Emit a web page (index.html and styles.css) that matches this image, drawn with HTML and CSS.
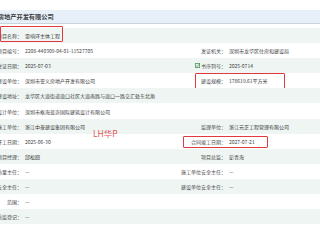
FILE: index.html
```html
<!DOCTYPE html>
<html lang="zh">
<head>
<meta charset="utf-8">
<link rel="stylesheet" href="styles.css">
</head>
<body>
<div class="page">
  <div class="head"><span class="head-text">深圳市誉义房地产开发有限公司</span></div>
  <div class="rows">
    <div class="row alt">
      <div class="lab">项目名称：</div><div class="val">雷响环主体工程</div>
      <div class="lab"></div><div class="val"></div>
      <span class="mark mark-name"></span>
    </div>
    <div class="row">
      <div class="lab">项目编号：</div><div class="val">2208-440309-04-01-11527705</div>
      <div class="lab">发证机关：</div><div class="val">深圳市龙华区住房和建设局</div>
    </div>
    <div class="row alt">
      <div class="lab">发证日期：</div><div class="val">2025-07-03</div>
      <div class="lab"><svg class="ico" viewBox="0 0 5 5" width="5" height="5"><rect x="0.4" y="0.4" width="4.2" height="4.2" fill="none" stroke="#4f9a5a" stroke-width="0.8"/><path d="M1.2 2.6 L2.2 3.6 L4.6 0.6" fill="none" stroke="#4f9a5a" stroke-width="0.8"/></svg>书序列号：</div><div class="val">2025-0714</div>
    </div>
    <div class="row">
      <div class="lab">建设单位：</div><div class="val">深圳市誉义房地产开发有限公司</div>
      <div class="lab">建设规模：</div><div class="val">178619.61平方米</div>
      <span class="mark mark-scale"></span>
    </div>
    <div class="row alt">
      <div class="lab">建设地址：</div><div class="val">龙华区大浪街道浪口社区大浪南路与浪口一路交汇处东北角</div>
      <div class="lab"></div><div class="val"></div>
    </div>
    <div class="row">
      <div class="lab">设计单位：</div><div class="val">深圳市枢海蓝奇国际建筑设计有限公司</div>
      <div class="lab"></div><div class="val"></div>
    </div>
    <div class="row alt">
      <div class="lab">施工单位：</div><div class="val">浙江中菱建设集团有限公司</div>
      <div class="lab">监理单位：</div><div class="val">浙江元正工程管理有限公司</div>
      <span class="wm">LH华P</span>
    </div>
    <div class="row">
      <div class="lab">开工日期：</div><div class="val">2025-06-30</div>
      <div class="lab">合同竣工日期：</div><div class="val">2027-07-21</div>
      <span class="mark mark-date"></span>
    </div>
    <div class="row alt">
      <div class="lab">项目经理：</div><div class="val">邱松圆</div>
      <div class="lab">项目总监：</div><div class="val">彭青海</div>
    </div>
    <div class="row">
      <div class="lab">质量主任：</div><div class="val">—</div>
      <div class="lab">施工单位安全主任：</div><div class="val">—</div>
    </div>
    <div class="row alt">
      <div class="lab">安全主任：</div><div class="val">—</div>
      <div class="lab">建设单位安全主任：</div><div class="val">—</div>
    </div>
    <div class="row">
      <div class="lab">范围：</div><div class="val">—</div>
      <div class="lab"></div><div class="val"></div>
    </div>
    <div class="row alt">
      <div class="lab">质监登记：</div><div class="val">—</div>
      <div class="lab"></div><div class="val"></div>
    </div>
  </div>
</div>
</body>
</html>
```
FILE: styles.css
```css
html, body {
  margin: 0;
  padding: 0;
  background: #ffffff;
  overflow: hidden;
}
body {
  width: 320px;
  height: 240px;
  font-family: "Noto Sans CJK SC", "Noto Sans", sans-serif;
  color: #333;
}
.page {
  padding-top: 10px;
}
.head {
  height: 13px;
  background: #e7f0f8;
  border-bottom: 1px solid #c9d3dc;
  display: flex;
  align-items: center;
  overflow: hidden;
}
.head-text {
  font-size: 6.2px;
  font-weight: bold;
  color: #3a3a3a;
  white-space: nowrap;
  margin-left: -33px;
}
.rows {
  margin-top: 4px;
}
.row {
  position: relative;
  display: grid;
  grid-template-columns: 22px 153px 51px 94px;
  height: 15.1px;
  align-items: center;
  font-size: 5px;
  white-space: nowrap;
}
.row.alt {
  background: #eef5f2;
}
.lab {
  display: flex;
  justify-content: flex-end;
  align-items: center;
  color: #4a4a4a;
  min-width: 0;
}
.val {
  padding-left: 3px;
  color: #3c3c3c;
  overflow: hidden;
}
.ico {
  margin-right: 0.5px;
}
.mark {
  position: absolute;
  border: 1px solid #e0393e;
  border-radius: 1px;
  box-sizing: border-box;
}
.mark-name {
  left: 0;
  top: -2px;
  width: 63px;
  height: 16px;
}
.mark-scale {
  left: 195px;
  top: 0;
  width: 90px;
  height: 17px;
}
.mark-date {
  left: 183px;
  top: 2px;
  width: 85px;
  height: 12px;
}
.wm {
  position: absolute;
  left: 93px;
  top: 10px;
  font-family: "Noto Sans CJK SC", sans-serif;
  font-size: 8.5px;
  color: #e2555a;
  line-height: 1;
}
```
